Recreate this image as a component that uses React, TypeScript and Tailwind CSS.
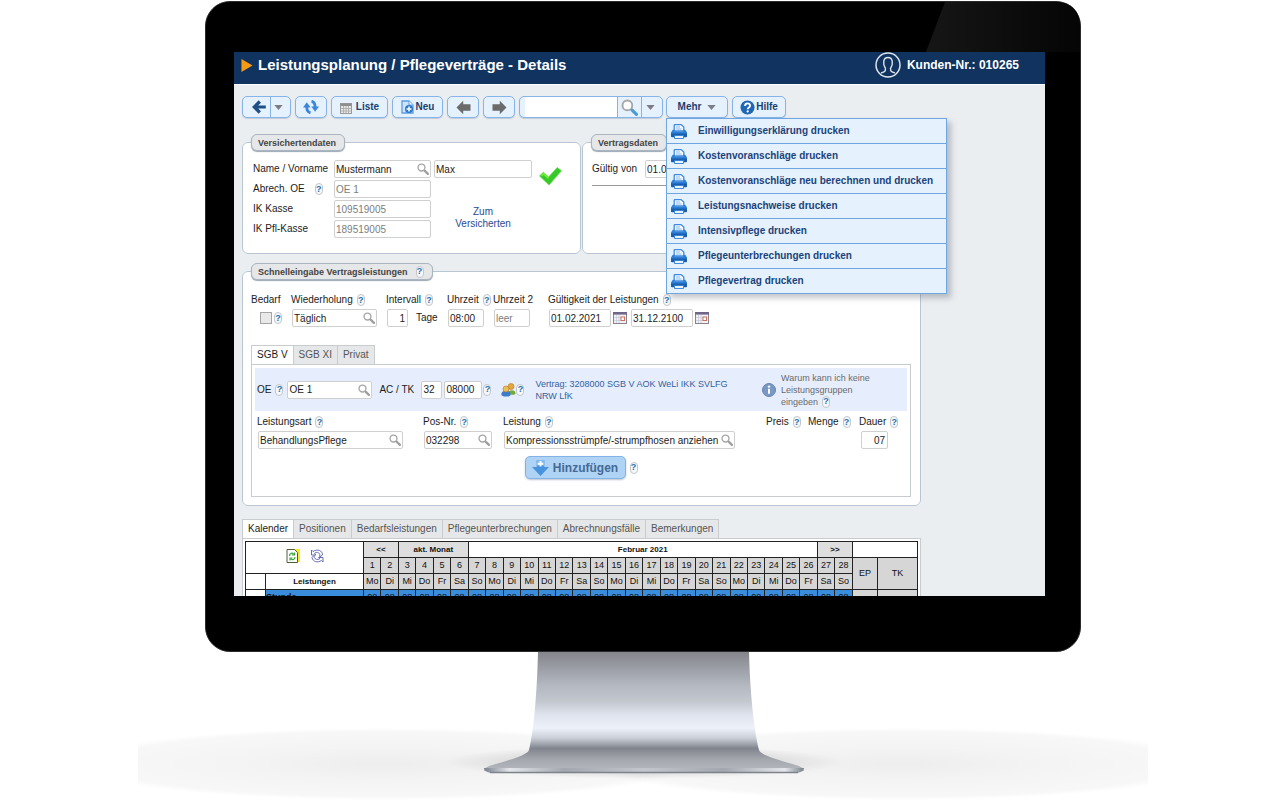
import type { ReactNode } from "react";
import clsx from "clsx";

const printActions = [
  "Einwilligungserklärung drucken",
  "Kostenvoranschläge drucken",
  "Kostenvoranschläge neu berechnen und drucken",
  "Leistungsnachweise drucken",
  "Intensivpflege drucken",
  "Pflegeunterbrechungen drucken",
  "Pflegevertrag drucken",
];

const serviceTabs = ["SGB V", "SGB XI", "Privat"];

const detailTabs = [
  "Kalender",
  "Positionen",
  "Bedarfsleistungen",
  "Pflegeunterbrechungen",
  "Abrechnungsfälle",
  "Bemerkungen",
];

const weekdays = ["Mo", "Di", "Mi", "Do", "Fr", "Sa", "So"];
const days = Array.from({ length: 28 }, (_, i) => i + 1);

/* Icons */

const ArrowLeft = ({ className }: { className?: string }) => (
  <svg viewBox="0 0 15 15" className={clsx("w-[15px] h-[15px]", className)} aria-hidden="true">
    <path d="M7.2 0.8 0.5 7.5l6.700 6.700V10.800H14.500V4.200H7.200Z" fill="currentColor" />
  </svg>
);

const BackIcon = () => (
  <svg viewBox="0 0 14 14" className="w-[14px] h-[14px]" aria-hidden="true">
    <path d="M7.800 1.500 2.300 7l5.500 5.500M3 7h10.800" fill="none" stroke="#1f4f87" strokeWidth="3.200" />
  </svg>
);

const CaretDown = () => (
  <svg viewBox="0 0 10 6" className="w-[9px] h-[5px]" aria-hidden="true">
    <path d="M0 0h10L5 6Z" fill="#7b7f85" />
  </svg>
);

const RefreshIcon = () => (
  <svg viewBox="0 0 16 14" className="w-[16px] h-[14px]" aria-hidden="true">
    <path d="M7.500 12.800C4.500 12 3.600 10 3.800 6.500" fill="none" stroke="#3a86dc" strokeWidth="2.800" />
    <path d="M0 7.500 3.800 2.300 7.600 7.500Z" fill="#3a86dc" />
    <path d="M8.500 1.200c3 .8 3.700 2.800 3.500 6.300" fill="none" stroke="#3a86dc" strokeWidth="2.800" />
    <path d="M8.300 6.500 12.100 11.700 16 6.500Z" fill="#3a86dc" />
  </svg>
);

const ListIcon = () => (
  <svg viewBox="0 0 12 11" className="mt-[2px] w-[12px] h-[11px]" aria-hidden="true">
    <rect x="0.5" y="0.5" width="11" height="10" fill="#e6e6e6" stroke="#9b9b9b" />
    <rect x="0.5" y="0.5" width="11" height="2.500" fill="#8d8d8d" />
    <path d="M1 5.500h10M1 8h10M3.500 3v7M6 3v7M8.500 3v7" stroke="#a8a8a8" strokeWidth="0.8" />
  </svg>
);

const NewIcon = () => (
  <svg viewBox="0 0 13 14" className="w-[13px] h-[14px]" aria-hidden="true">
    <path d="M1 1h7l4 4v8H1Z" fill="#cfe3fa" stroke="#5b9ee2" strokeWidth="1.3" />
    <path d="M8 1v4h4" fill="#fff" stroke="#5b9ee2" strokeWidth="1" />
    <circle cx="8" cy="9" r="4" fill="#2a78cc" />
    <path d="M8 6.500v5M5.500 9h5" stroke="#fff" strokeWidth="1.500" />
  </svg>
);

const SearchIcon = ({ large = false }: { large?: boolean }) => (
  <svg
    viewBox="0 0 16 16"
    className={large ? "w-[17px] h-[17px]" : "w-[12px] h-[12px]"}
    aria-hidden="true"
  >
    <circle cx="6" cy="6" r="4.600" fill="#fff" stroke="#a6a6a6" strokeWidth="1.800" />
    <path
      d="m10.500 10.500 4 4"
      stroke={large ? "#4a9bdc" : "#a0a0a0"}
      strokeWidth="3"
      strokeLinecap="round"
    />
  </svg>
);

const HelpIcon = () => (
  <svg viewBox="0 0 16 16" className="w-[15px] h-[15px]" aria-hidden="true">
    <circle cx="8" cy="8" r="7.500" fill="#1f67b5" />
    <path
      d="M5.400 6.300c0-3.600 5.400-3.400 5.400-.3 0 1.900-2.600 1.900-2.600 3.800"
      fill="none"
      stroke="#fff"
      strokeWidth="2"
    />
    <circle cx="8.200" cy="12.200" r="1.200" fill="#fff" />
  </svg>
);

const PrinterIcon = () => (
  <svg viewBox="0 0 16 15" className="w-[16px] h-[15px] shrink-0" aria-hidden="true">
    <path d="M3.200 7V1.500C3.200.9 3.500.6 4 .6h6L12.800 3v4Z" fill="#f4f9ff" stroke="#3f8ade" strokeWidth="1.300" />
    <path d="M5 3h4M5 5h5.500" stroke="#7fb3ea" strokeWidth="0.900" />
    <path d="M1.800 5.800h1.700v1.700h9V5.800h1.700L16 8.400v3.800H0V8.400Z" fill="#2d7fd6" />
    <path d="M0 9.500h16v2.700a1 1 0 0 1-1 1H1a1 1 0 0 1-1-1Z" fill="#1a5fae" />
    <path d="M3.500 11.500h9v3h-9Z" fill="#e8f2fd" stroke="#2d7fd6" strokeWidth="0.900" />
  </svg>
);

const CheckIcon = () => (
  <svg viewBox="0 0 24 20" className="w-[23px] h-[20px]" aria-hidden="true">
    <path d="m0.500 10 4-3.800 5.500 4.800 9-10 4.500 3.500L10.500 19.500Z" fill="#35c929" stroke="#6fdc5a" strokeWidth="0.800" />
    <path d="m2.500 10 2.300-2.200L10 12.500" fill="none" stroke="#6ff02f" strokeWidth="1.800" />
  </svg>
);

const DateIcon = () => (
  <svg viewBox="0 0 14 12" className="w-[14px] h-[12px]" aria-hidden="true">
    <rect x="0.500" y="0.500" width="13" height="11" fill="#f3f1f4" stroke="#8b8290" />
    <path d="M0 1.300h14" stroke="#70668a" strokeWidth="2.600" />
    <path d="M1 5.500h7M1 8.500h7M3.500 3v8M6 3v8" stroke="#c9ccda" strokeWidth="0.800" />
    <rect x="8" y="5" width="3.500" height="3.500" fill="#fff" stroke="#c9705f" />
  </svg>
);

const PeopleIcon = () => (
  <svg viewBox="0 0 15 14" className="w-[15px] h-[14px]" aria-hidden="true">
    <path d="M7 11c0-5 7.500-5 7.500-.8 0 1.200-1 1.600-3.500 1.600Z" fill="#77a83a" />
    <circle cx="10" cy="3.500" r="3" fill="#e5a83b" stroke="#b3781d" strokeWidth="0.600" />
    <path d="M0.300 11.500c0-5.500 9.400-5.500 9.400 0 0 2.800-9.400 2.800-9.400 0Z" fill="#3d7cc9" />
    <circle cx="5" cy="6" r="3" fill="#efbd55" stroke="#b3781d" strokeWidth="0.600" />
  </svg>
);

const InfoIcon = () => (
  <svg viewBox="0 0 14 14" className="w-[14px] h-[14px] shrink-0" aria-hidden="true">
    <circle cx="7" cy="7" r="6.500" fill="#7a98c4" stroke="#6784b1" />
    <circle cx="7" cy="3.600" r="1.200" fill="#fff" />
    <path d="M7 5.800v5" stroke="#fff" strokeWidth="2" />
  </svg>
);

const AddIcon = () => (
  <svg viewBox="0 0 18 17" className="w-[17px] h-[16px]" aria-hidden="true">
    <path d="M5 0h8v7.500h5L9 17 0 7.500h5Z" fill="#4793dd" />
    <path d="M5 0h8v6H5Z" fill="#7fbaf0" />
    <path d="M9 1v6M6 4h6" stroke="#fff" strokeWidth="2" />
  </svg>
);

const SheetIcon = () => (
  <svg viewBox="0 0 14 14" className="w-[14px] h-[14px]" aria-hidden="true">
    <path d="M2 0h12v13H2Z" fill="#f4ec1f" />
    <path d="M1 0.500h7.500L11.500 3.500v10H1Z" fill="#fff" stroke="#4f5c3a" />
    <path
      d="M3.500 7C3.500 4 6.500 3.500 7.500 5.200M8.500 3.500v2.500H6M9 8C9 10.800 6 11.300 5 9.800M4 11.500V9h2.500"
      fill="none"
      stroke="#3ca63c"
      strokeWidth="1.200"
    />
  </svg>
);

const CycleIcon = () => (
  <svg viewBox="0 0 14 14" className="w-[14px] h-[14px]" aria-hidden="true">
    <path
      d="M1.500 1v5H6L4.500 4.300c2-1.600 4.500-1.200 5.300 1.200V8L12.500 6C12.500 1.500 7.500-.5 3 2.500ZM13 13V8.500H8.500l1.300 1.300c-2 1.200-4.500.8-5.500-1.300L4 6.500 2 8.500C3 13 7.500 14 11.500 11.500Z"
      fill="#fff"
      stroke="#5660ae"
      strokeWidth="0.900"
    />
  </svg>
);

const PortraitIcon = () => (
  <svg viewBox="0 0 26 26" className="w-[26px] h-[26px]" aria-hidden="true" fill="none" stroke="#dfe5ee">
    <circle cx="13" cy="13" r="12" strokeWidth="1.500" />
    <path
      d="M10.500 16.500C7.500 12 8 5.500 13 5.500s5.500 6.500 2.500 11c0 3 1 3.300 4.500 4.500M10.500 16.500c0 3-1 3.300-4.500 4.500"
      strokeWidth="1.400"
    />
  </svg>
);

/* Form parts */

const HelpBadge = () => (
  <button
    type="button"
    aria-label="Hilfe anzeigen"
    className="inline-flex h-[12px] w-[8px] shrink-0 items-center justify-center rounded-full border border-[#c3c7cb] bg-[#f5f7f9] align-middle text-[9px] leading-none font-bold text-[#2672b4]"
  >
    ?
  </button>
);

const Label = ({ htmlFor, help, children }: { htmlFor?: string; help?: boolean; children: ReactNode }) => (
  <div className="flex h-[14px] items-center gap-1 whitespace-nowrap">
    {htmlFor ? <label htmlFor={htmlFor}>{children}</label> : <span>{children}</span>}
    {help && <HelpBadge />}
  </div>
);

type FieldProps = {
  id: string;
  value: string;
  className?: string;
  label?: string;
  search?: boolean;
  muted?: boolean;
  right?: boolean;
};

const Field = ({ id, value, className, label, search, muted, right }: FieldProps) => (
  <div className={clsx("relative h-[18px] shrink-0", className)}>
    <input
      id={id}
      type="text"
      aria-label={label}
      defaultValue={value}
      className={clsx(
        "block h-full w-full rounded-[2px] border border-[#cfcfcf] bg-white pl-px",
        search ? "pr-[13px]" : "pr-[2px]",
        muted ? "text-[#7d7d7d]" : "text-[#1c1c1c]",
        right && "text-right"
      )}
    />
    {search && (
      <span className="absolute top-[3px] right-[2px]">
        <SearchIcon />
      </span>
    )}
  </div>
);

const Group = ({ title, help, className, children }: { title: string; help?: boolean; className?: string; children: ReactNode }) => (
  <fieldset className={clsx("min-w-0 rounded-[6px] border border-[#b9c6d2] bg-white", className)}>
    <legend className="ml-2 flex h-[17px] items-center gap-2 rounded-[6px] border border-[#a9b5c0] bg-[#e6e7e8] pr-2 pl-[6px] text-[9px] font-bold text-[#444] shadow-[0_1px_1px_#9aa7b3]">
      {title}
      {help && <HelpBadge />}
    </legend>
    {children}
  </fieldset>
);

const Tabs = ({ items }: { items: string[] }) => (
  <div role="tablist" className="flex">
    {items.map((item, i) => (
      <button
        key={item}
        type="button"
        role="tab"
        aria-selected={i === 0}
        className={clsx(
          "h-[19px] border-t border-r border-[#c9cccf] px-[5px]",
          i === 0 ? "border-l bg-white text-[#1c1c1c]" : "bg-[#e6e7e8] text-[#555]"
        )}
      >
        {item}
      </button>
    ))}
  </div>
);

const ToolButton = ({ label, className, children }: { label?: string; className?: string; children: ReactNode }) => (
  <button
    type="button"
    aria-label={label}
    className={clsx(
      "flex h-[22px] items-center justify-center rounded-[5px] border border-[#86b4e8] bg-[#e6f1fe] font-bold text-[#1b3f70] shadow-[0_1px_1px_#c3cbd4]",
      className
    )}
  >
    {children}
  </button>
);

/* Page sections */

const TitleBar = () => (
  <header className="flex h-[33px] items-center border-b border-white bg-[#10335f] pr-[26px] pl-[7px] text-white">
    <svg viewBox="0 0 12 14" className="mb-[6px] h-[13px] w-[12px]" aria-hidden="true">
      <path d="M0 0 12 7 0 14Z" fill="#f59a12" />
    </svg>
    <h1 className="mb-[6px] ml-[5px] text-[15px] font-bold">
      Leistungsplanung / Pflegeverträge - Details
    </h1>
    <div className="mb-[6px] ml-auto flex items-center gap-[6px] text-[12px] font-bold">
      <PortraitIcon />
      Kunden-Nr.: 010265
    </div>
  </header>
);

const PrintMenu = () => (
  <ul
    role="menu"
    className="absolute top-full left-0 z-10 w-[281px] border border-[#6ea6e2] bg-[#e6f1fe] shadow-[4px_4px_6px_rgba(80,90,100,0.35)]"
  >
    {printActions.map((action) => (
      <li key={action} role="none" className="border-b border-[#6ea6e2] last:border-b-0">
        <button
          type="button"
          role="menuitem"
          className="flex h-[24px] w-full items-center gap-[11px] pl-1 font-bold whitespace-nowrap text-[#1b4379]"
        >
          <PrinterIcon />
          {action}
        </button>
      </li>
    ))}
  </ul>
);

const Toolbar = () => (
  <div className="flex items-center gap-1">
    <div className="flex h-[22px] overflow-hidden rounded-[5px] border border-[#86b4e8] bg-[#e6f1fe] shadow-[0_1px_1px_#c3cbd4]">
      <button type="button" aria-label="Zurück" className="flex w-[27px] items-center justify-center pl-1">
        <BackIcon />
      </button>
      <button
        type="button"
        aria-label="Verlauf"
        className="flex w-[20px] items-center justify-center border-l border-[#86b4e8] pr-1"
      >
        <CaretDown />
      </button>
    </div>
    <ToolButton label="Aktualisieren" className="w-[32px]">
      <RefreshIcon />
    </ToolButton>
    <ToolButton className="w-[57px] gap-1">
      <ListIcon />
      Liste
    </ToolButton>
    <ToolButton className="w-[51px] gap-[2px]">
      <NewIcon />
      Neu
    </ToolButton>
    <ToolButton label="Vorheriger" className="w-[32px]">
      <ArrowLeft className="text-[#6b6b6b]" />
    </ToolButton>
    <ToolButton label="Nächster" className="w-[32px]">
      <ArrowLeft className="rotate-180 text-[#6b6b6b]" />
    </ToolButton>
    <div className="flex h-[22px] w-[144px] overflow-hidden rounded-[5px] border border-[#86b4e8] bg-[#e6f1fe] pl-[5px] shadow-[0_1px_1px_#c3cbd4]">
      <input type="text" aria-label="Suche" className="min-w-0 flex-1 bg-white" />
      <button
        type="button"
        aria-label="Suchen"
        className="flex w-[24px] items-center justify-center border-l border-[#86b4e8]"
      >
        <SearchIcon large />
      </button>
      <button
        type="button"
        aria-label="Suchoptionen"
        className="flex w-[21px] items-center justify-center border-l border-[#86b4e8] pr-1"
      >
        <CaretDown />
      </button>
    </div>
    <div className="relative -ml-px">
      <ToolButton className="w-[62px] gap-[6px]">
        Mehr
        <CaretDown />
      </ToolButton>
      <PrintMenu />
    </div>
    <ToolButton className="w-[54px] gap-px">
      <HelpIcon />
      Hilfe
    </ToolButton>
  </div>
);

const InsuredData = () => (
  <Group title="Versichertendaten">
    <div className="flex pt-[9px] pb-[15px] pl-[10px]">
      <div className="grid grid-cols-[81px_97px] items-center gap-y-[2px]">
        <Label htmlFor="nachname">Name / Vorname</Label>
        <Field id="nachname" value="Mustermann" search />
        <div className="flex items-center gap-[10px]">
          <label htmlFor="oe-abrechnung">Abrech. OE</label>
          <HelpBadge />
        </div>
        <Field id="oe-abrechnung" value="OE 1" muted />
        <Label htmlFor="ik-kasse">IK Kasse</Label>
        <Field id="ik-kasse" value="109519005" muted />
        <Label htmlFor="ik-pflegekasse">IK Pfl-Kasse</Label>
        <Field id="ik-pflegekasse" value="189519005" muted />
      </div>
      <div className="ml-[3px] w-[98px]">
        <Field id="vorname" label="Vorname" value="Max" />
        <a href="#versicherte" className="mt-7 block text-center leading-[12px] text-[#2b4a92]">
          Zum
          <br />
          Versicherten
        </a>
      </div>
      <div className="mt-[6px] ml-[7px]">
        <CheckIcon />
      </div>
    </div>
  </Group>
);

const ContractData = () => (
  <Group title="Vertragsdaten">
    <div className="px-[9px] pt-[9px]">
      <div className="flex items-center gap-2 border-b border-[#9a9a9a] pb-[7px]">
        <label htmlFor="gueltig-von">Gültig von</label>
        <Field id="gueltig-von" value="01.02.2021" className="w-[62px]" />
      </div>
    </div>
  </Group>
);

const ServiceForm = () => (
  <div className="border border-[#c9cccf] bg-white p-[3px] pb-[17px]">
    <div className="flex h-[43px] items-center bg-[#e6eefe] pr-[22px] pl-[2px]">
      <label htmlFor="oe">OE</label>
      <div className="ml-1 flex items-center gap-1">
        <HelpBadge />
        <Field id="oe" value="OE 1" search className="w-[85px]" />
      </div>
      <label htmlFor="ac" className="ml-[7px] w-[42px] whitespace-nowrap">
        AC / TK
      </label>
      <Field id="ac" value="32" className="w-[21px]" />
      <Field id="tk" label="TK" value="08000" className="mr-px ml-[2px] w-[38px]" />
      <HelpBadge />
      <div className="ml-[10px] flex items-center">
        <PeopleIcon />
        <HelpBadge />
      </div>
      <p className="ml-[11px] w-[208px] text-[9px] leading-[12px] text-[#35619c]">
        Vertrag: 3208000 SGB V AOK WeLi IKK SVLFG NRW LfK
      </p>
      <div className="ml-auto flex items-center gap-[5px]">
        <InfoIcon />
        <div className="w-[104px] text-[9px] leading-[12px] text-[#6a6a6a]">
          <p>Warum kann ich keine Leistungsgruppen</p>
          <div className="flex items-center gap-1">
            eingeben
            <HelpBadge />
          </div>
        </div>
      </div>
    </div>

    <div className="mt-1 flex pl-[2px]">
      <div className="w-[166px]">
        <Label htmlFor="leistungsart" help>
          Leistungsart
        </Label>
        <Field id="leistungsart" value="BehandlungsPflege" search className="mt-[2px] ml-px w-[145px]" />
      </div>
      <div className="w-[80px]">
        <Label htmlFor="pos-nr" help>
          Pos-Nr.
        </Label>
        <Field id="pos-nr" value="032298" search className="mt-[2px] ml-px w-[68px]" />
      </div>
      <div className="w-[263px]">
        <Label htmlFor="leistung" help>
          Leistung
        </Label>
        <Field
          id="leistung"
          value="Kompressionsstrümpfe/-strumpfhosen anziehen"
          search
          className="mt-[2px] ml-px w-[231px]"
        />
      </div>
      <div className="w-[42px]">
        <Label help>Preis</Label>
      </div>
      <div className="w-[51px]">
        <Label help>Menge</Label>
      </div>
      <div>
        <Label htmlFor="dauer" help>
          Dauer
        </Label>
        <Field id="dauer" value="07" right className="mt-[2px] ml-[2px] w-[27px]" />
      </div>
    </div>

    <div className="mt-[7px] flex items-center justify-center gap-1">
      <button
        type="button"
        className="flex h-[23px] w-[101px] items-center justify-center gap-1 rounded-[5px] border border-[#83b3e6] bg-[#afd3f5] text-[12px] font-bold text-[#446a96] shadow-[0_1px_2px_#b9c3cd]"
      >
        <AddIcon />
        Hinzufügen
      </button>
      <HelpBadge />
    </div>
  </div>
);

const QuickEntry = () => (
  <Group title="Schnelleingabe Vertragsleistungen" help className="mt-[9px]">
    <div className="pt-[13px] pr-[9px] pb-2 pl-2">
      <div className="flex">
        <div className="w-[40px]">
          <Label htmlFor="bedarf">Bedarf</Label>
          <div className="mt-[2px] flex h-[18px] items-center gap-[2px] pl-[9px]">
            <input
              id="bedarf"
              type="checkbox"
              className="h-[12px] w-[12px] appearance-none border border-[#a5a5a5] bg-[#e9e9e9]"
            />
            <HelpBadge />
          </div>
        </div>
        <div className="w-[95px]">
          <Label htmlFor="wiederholung" help>
            Wiederholung
          </Label>
          <Field id="wiederholung" value="Täglich" search className="mt-[2px] ml-px w-[85px]" />
        </div>
        <div className="w-[61px]">
          <Label htmlFor="intervall" help>
            Intervall
          </Label>
          <div className="mt-[2px] ml-px flex items-center gap-2">
            <Field id="intervall" value="1" right className="w-[21px]" />
            Tage
          </div>
        </div>
        <div className="w-[46px]">
          <Label htmlFor="uhrzeit" help>
            Uhrzeit
          </Label>
          <Field id="uhrzeit" value="08:00" className="mt-[2px] ml-px w-[36px]" />
        </div>
        <div className="w-[55px]">
          <Label htmlFor="uhrzeit-2">Uhrzeit 2</Label>
          <Field id="uhrzeit-2" value="leer" muted className="mt-[2px] ml-px w-[36px]" />
        </div>
        <div>
          <Label htmlFor="gueltig-ab" help>
            Gültigkeit der Leistungen
          </Label>
          <div className="mt-[2px] ml-px flex items-center gap-[2px]">
            <Field id="gueltig-ab" value="01.02.2021" className="w-[62px]" />
            <button type="button" aria-label="Startdatum wählen">
              <DateIcon />
            </button>
            <Field id="gueltig-bis" label="Gültig bis" value="31.12.2100" className="ml-[2px] w-[62px]" />
            <button type="button" aria-label="Enddatum wählen">
              <DateIcon />
            </button>
          </div>
        </div>
      </div>

      <div className="mt-[18px]">
        <Tabs items={serviceTabs} />
        <ServiceForm />
      </div>
    </div>
  </Group>
);

const Calendar = () => (
  <div className="mt-[13px]">
    <Tabs items={detailTabs} />
    <div className="border border-[#c9cccf] bg-white p-[2px]">
      <table className="w-full table-fixed border-collapse text-center text-[9px] leading-none text-[#111] [&_td]:border [&_td]:border-[#222] [&_td]:p-0 [&_th]:border [&_th]:border-[#222] [&_th]:p-0">
        <colgroup>
          <col className="w-[20px]" />
          <col className="w-[98px]" />
          {days.map((day) => (
            <col key={day} />
          ))}
          <col className="w-[25px]" />
          <col className="w-[40px]" />
        </colgroup>
        <thead>
          <tr className="h-[16px] text-[8px]">
            <td colSpan={2} rowSpan={2}>
              <div className="flex items-center justify-center gap-[10px] pb-1">
                <button type="button" aria-label="Kalender aktualisieren">
                  <SheetIcon />
                </button>
                <button type="button" aria-label="Neu laden">
                  <CycleIcon />
                </button>
              </div>
            </td>
            <th colSpan={2} className="bg-[#dedede]">
              &lt;&lt;
            </th>
            <th colSpan={4} className="bg-[#dedede]">
              akt. Monat
            </th>
            <th colSpan={20}>Februar 2021</th>
            <th colSpan={2} className="bg-[#dedede]">
              &gt;&gt;
            </th>
            <td colSpan={2} />
          </tr>
          <tr className="h-[16px] bg-[#d6d6d6]">
            {days.map((day) => (
              <th key={day} className="font-normal">
                {day}
              </th>
            ))}
            <th rowSpan={2} className="font-normal">
              EP
            </th>
            <th rowSpan={2} className="font-normal">
              TK
            </th>
          </tr>
          <tr className="h-[16px]">
            <td />
            <th className="text-[8px]">Leistungen</th>
            {days.map((day, i) => (
              <th key={day} className="bg-[#d6d6d6] font-normal">
                {weekdays[i % 7]}
              </th>
            ))}
          </tr>
        </thead>
        <tbody>
          <tr className="h-[16px] bg-[#3a8ddd]">
            <td className="bg-white" />
            <td className="text-left font-bold">Stunde</td>
            {days.map((day) => (
              <td key={day}>08</td>
            ))}
            <td className="bg-[#d6d6d6]" />
            <td className="bg-[#d6d6d6]" />
          </tr>
        </tbody>
      </table>
    </div>
  </div>
);

const MonitorStand = () => (
  <svg viewBox="0 0 1010 148" className="block w-full max-w-[1010px]" aria-hidden="true">
    <defs>
      <linearGradient id="neck" x1="0" y1="0" x2="0" y2="1">
        <stop offset="0" stopColor="#85868c" />
        <stop offset="0.120" stopColor="#999ba2" />
        <stop offset="0.280" stopColor="#b3b8c1" />
        <stop offset="0.420" stopColor="#c4c9d0" />
        <stop offset="0.530" stopColor="#dfe4ee" />
        <stop offset="0.640" stopColor="#edf1fa" />
        <stop offset="0.720" stopColor="#ccd1d9" />
        <stop offset="0.810" stopColor="#81848c" />
        <stop offset="0.900" stopColor="#a3a6ad" />
        <stop offset="1" stopColor="#b6b9c0" />
      </linearGradient>
      <linearGradient id="foot" x1="0" y1="0" x2="1" y2="0">
        <stop offset="0" stopColor="#7b828d" />
        <stop offset="0.080" stopColor="#e3e6ea" />
        <stop offset="0.250" stopColor="#a3a7af" />
        <stop offset="0.500" stopColor="#c3c6cc" />
        <stop offset="0.750" stopColor="#a3a7af" />
        <stop offset="0.940" stopColor="#e3e6ea" />
        <stop offset="1" stopColor="#7b828d" />
      </linearGradient>
      <radialGradient id="floor">
        <stop offset="0" stopColor="#000" stopOpacity="0.070" />
        <stop offset="0.450" stopColor="#000" stopOpacity="0.045" />
        <stop offset="0.900" stopColor="#000" stopOpacity="0.030" />
        <stop offset="1" stopColor="#000" stopOpacity="0" />
      </radialGradient>
      <radialGradient id="contact">
        <stop offset="0" stopColor="#000" stopOpacity="0.250" />
        <stop offset="1" stopColor="#000" stopOpacity="0" />
      </radialGradient>
    </defs>
    <ellipse cx="245" cy="112" rx="310" ry="36" fill="url(#floor)" />
    <ellipse cx="765" cy="112" rx="310" ry="36" fill="url(#floor)" />
    <ellipse cx="505" cy="110" rx="200" ry="17" fill="url(#contact)" />
    <path
      d="M400 0H611C612 40 616 78 621 98C623 104 645 109 661 114C665 116 666 117 666 119H346C346 117 347 116 351 114C367 109 389 104 391 98C396 78 399 40 400 0Z"
      fill="url(#neck)"
    />
    <path d="M346 116H666C666 119 662 121 656 121H356C350 121 346 119 346 116Z" fill="url(#foot)" />
    <path d="M352 120.500H660" stroke="#7d838d" strokeWidth="1.500" />
  </svg>
);

const App = () => (
  <div className="min-h-screen overflow-hidden bg-white pt-px pl-[6px] font-['Liberation_Sans',Arial,sans-serif] text-[10px] leading-[14px] text-[#1c1c1c]">
    <main className="relative mx-auto w-full max-w-[876px] rounded-[25px] border border-[#2a2a2a] bg-black pt-[50px] pr-[35px] pb-[55px] pl-[28px]">
      <svg viewBox="0 0 154 50" className="absolute top-0 right-0 h-[50px] w-[154px]" aria-hidden="true">
        <defs>
          <linearGradient id="gloss" x1="0" y1="0" x2="1" y2="0">
            <stop offset="0" stopColor="#161616" />
            <stop offset="1" stopColor="#050505" />
          </linearGradient>
        </defs>
        <path d="M19 0H129Q154 0 154 25V50H0Z" fill="url(#gloss)" />
      </svg>
      <div className="aspect-[811/544] overflow-hidden bg-[#ebeef1]">
        <TitleBar />
        <div className="max-w-[687px] pt-[11px] pl-2">
          <Toolbar />
          <div className="mt-4 grid grid-cols-2 gap-px">
            <InsuredData />
            <ContractData />
          </div>
          <QuickEntry />
          <Calendar />
        </div>
      </div>
    </main>
    <div className="flex justify-center">
      <MonitorStand />
    </div>
  </div>
);

export default App;
